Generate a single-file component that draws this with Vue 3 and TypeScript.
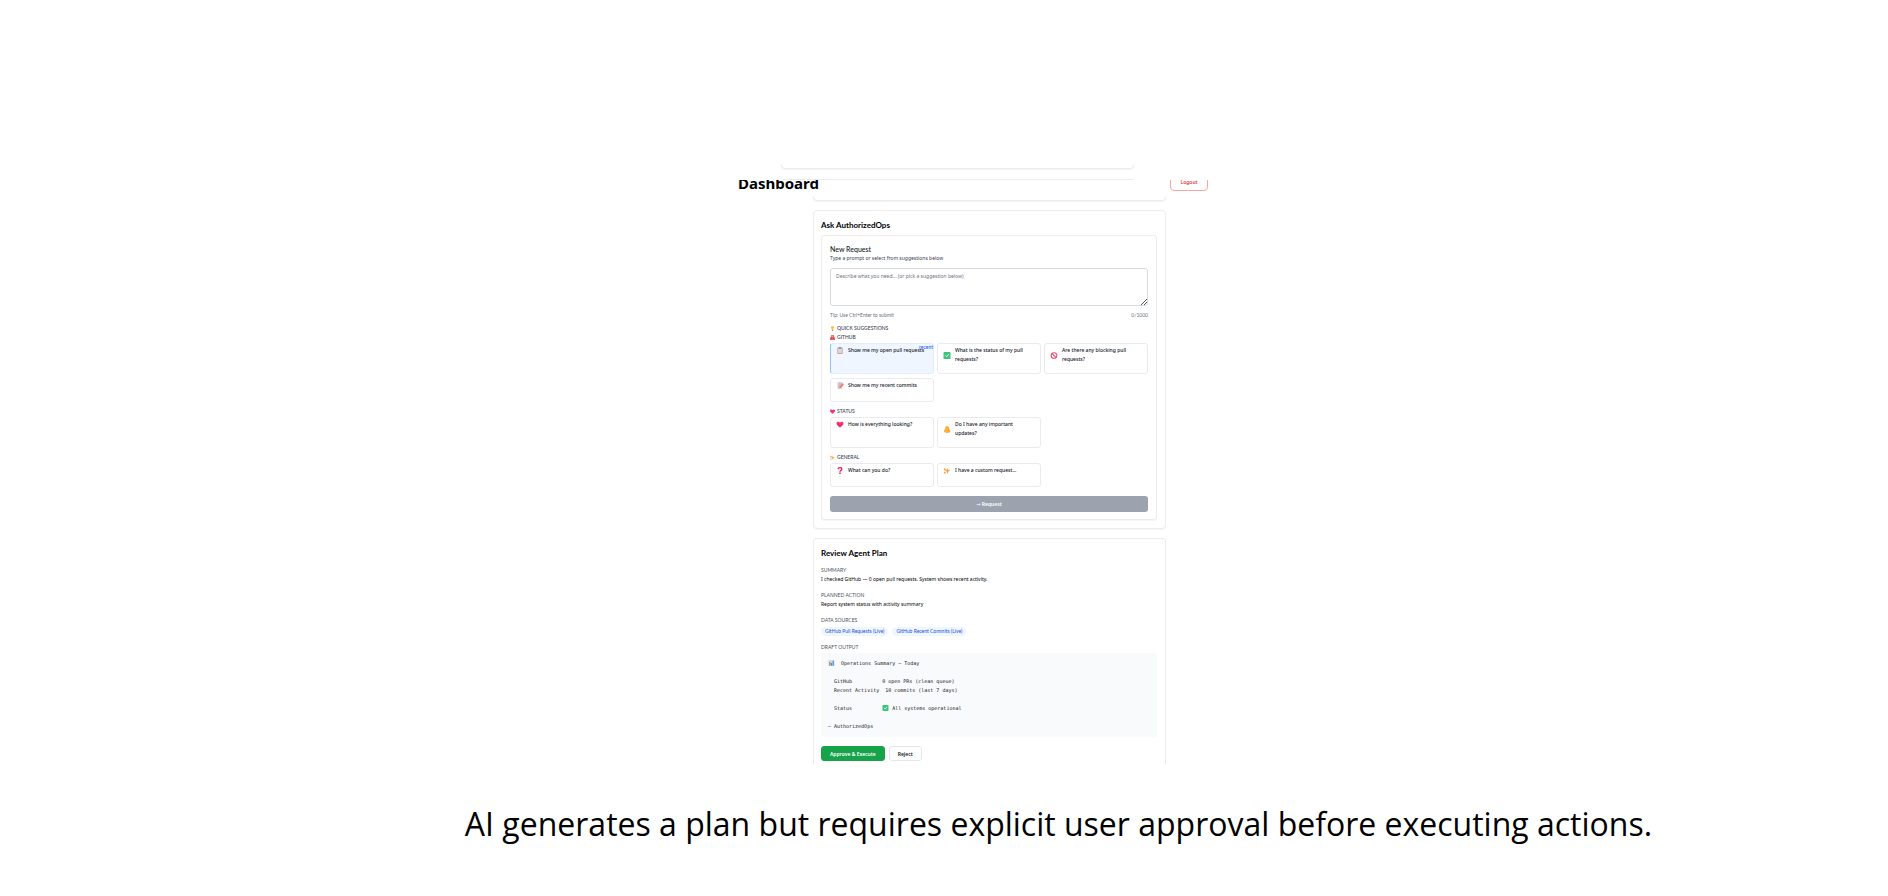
<script setup lang="ts">
import { ref } from 'vue'

interface Suggestion { icon: string; text: string; recent?: boolean }
interface Group { icon: string; name: string; items: Suggestion[] }

const prompt = ref('')
const groups: Group[] = [
  {
    icon: 'octopus', name: 'GITHUB', items: [
      { icon: 'clipboard', text: 'Show me my open pull requests', recent: true },
      { icon: 'check', text: 'What is the status of my pull requests?' },
      { icon: 'blocked', text: 'Are there any blocking pull requests?' },
      { icon: 'memo', text: 'Show me my recent commits' },
    ],
  },
  {
    icon: 'heart', name: 'STATUS', items: [
      { icon: 'heart', text: 'How is everything looking?' },
      { icon: 'bell', text: 'Do I have any important updates?' },
    ],
  },
  {
    icon: 'sparkles', name: 'GENERAL', items: [
      { icon: 'question', text: 'What can you do?' },
      { icon: 'sparkles', text: 'I have a custom request...' },
    ],
  },
]
const sources = ['GitHub Pull Requests (Live)', 'GitHub Recent Commits (Live)']
</script>

<template>
  <svg class="defs" aria-hidden="true">
    <symbol id="bulb" viewBox="0 0 16 16"><path d="M8 0a5 5 0 0 0-3 9l1 3h4l1-3a5 5 0 0 0-3-9z" fill="#fcc53a" /><path d="M6 12h4v3l-1 1H7l-1-1z" fill="#8d8796" /></symbol>
    <symbol id="octopus" viewBox="0 0 16 16"><path d="M3 4a5 5 0 0 1 10 0v3h3v9H0V7h3z" fill="#f4606a" /><path d="M3 9h3v3H3zM10 9h3v3h-3z" fill="#a03c60" /><path d="M5 2h5v4H5z" fill="#ff9a70" /></symbol>
    <symbol id="clipboard" viewBox="0 0 16 16"><rect x="2" y="1" width="12" height="15" rx="1" fill="#c79a8e" /><path d="M4 3h8v11H4z" fill="#e6e8f6" /><path d="M5 0h6v4H5z" fill="#9292a8" /><path d="M5 6h6M5 9h6M5 12h6" stroke="#b4b6cc" /></symbol>
    <symbol id="check" viewBox="0 0 16 16"><rect width="16" height="16" rx="2" fill="#3fc47c" /><path d="m4 8 3 3 5-6" fill="none" stroke="#fff" stroke-width="2" /></symbol>
    <symbol id="blocked" viewBox="0 0 16 16"><circle cx="8" cy="8" r="6.5" fill="#fff" stroke="#f4436c" stroke-width="2.4" /><path d="m3.5 3.5 9 9" stroke="#f4436c" stroke-width="2.4" /></symbol>
    <symbol id="memo" viewBox="0 0 16 16"><path d="M2 0h11v16H2z" fill="#d9d5e8" /><path d="M4 3h7M4 6h6M4 9h4M4 12h3" stroke="#9896ae" /><path d="m6 14 1-4 6-6 3 3-6 6z" fill="#f47b4f" /><path d="m12 4 2-1 2 2v2z" fill="#e8466e" /></symbol>
    <symbol id="heart" viewBox="0 0 16 16"><path d="M8 15C4 12 0 9 0 5c0-4 6-5 8-1 2-4 8-3 8 1 0 4-4 7-8 10z" fill="#f92f6f" /></symbol>
    <symbol id="bell" viewBox="0 0 16 16"><path d="M8 0c3 0 4 2 4 5l3 7v2H1v-2l3-7c0-3 1-5 4-5z" fill="#fbb13a" /><path d="M10 1c4 3 2 7 5 11v2h-5z" fill="#f9a035" /><path d="M6 14h4v2H6z" fill="#d08a4a" /></symbol>
    <symbol id="sparkles" viewBox="0 0 16 16"><path d="m9 2 2 5 5 1-5 2-2 6-2-6-4-2 4-1z" fill="#fba140" /><path d="m3 1 1 3 3 1-3 1-1 3-1-3-2-1 2-1zM3 10l1 2 2 1-2 1-1 2-1-2-2-1 2-1z" fill="#fa8f45" /></symbol>
    <symbol id="question" viewBox="0 0 16 16"><path d="M4 5c0-5 8-5 8 0 0 3-4 3-4 6" fill="none" stroke="#f3265c" stroke-width="3.4" /><circle cx="8" cy="14" r="2" fill="#f3265c" /></symbol>
    <symbol id="chart" viewBox="0 0 16 16"><path d="M0 0h16v16H0z" fill="#d7d9e8" /><path d="M2 5h3v10H2z" fill="#2fb477" /><path d="M6.500 8h3v7h-3z" fill="#ef476a" /><path d="M11 2h3v13h-3z" fill="#3b8bea" /></symbol>
  </svg>

  <main class="page">
    <div class="row row-top"><div class="edge edge-bottom"></div></div>
    <div class="band">
      <div class="row row-top"><div class="edge edge-top"></div></div>
      <div class="row row-head">
        <header class="head">
          <h1>Dashboard</h1>
          <button type="button" class="logout">Logout</button>
        </header>
      </div>
    </div>
    <div class="row row-main">
      <div class="column">
        <div class="edge edge-bottom"></div>

        <section class="card ask">
          <h2>Ask AuthorizedOps</h2>
          <form class="request" @submit.prevent>
            <h3><label for="prompt">New Request</label></h3>
            <p class="hint">Type a prompt or select from suggestions below</p>
            <div class="box">
              <textarea id="prompt" v-model="prompt" maxlength="1000" placeholder="Describe what you need... (or pick a suggestion below)"></textarea>
              <svg class="grip" viewBox="0 0 6 6" aria-hidden="true"><path d="M0 6 6 0M3 6l3-3" stroke="#555" /></svg>
            </div>
            <div class="meta"><span>Tip: Use Ctrl+Enter to submit</span><span>{{ prompt.length }}/1000</span></div>
            <h4 class="label quick"><svg aria-hidden="true"><use href="#bulb" /></svg>QUICK SUGGESTIONS</h4>
            <section v-for="g in groups" :key="g.name" class="group">
              <h5 class="label"><svg aria-hidden="true"><use :href="'#' + g.icon" /></svg>{{ g.name }}</h5>
              <div class="options">
                <button v-for="s in g.items" :key="s.text" type="button" class="option" :class="{ active: s.recent }" @click="prompt = s.text">
                  <span class="line"><svg aria-hidden="true"><use :href="'#' + s.icon" /></svg><span>{{ s.text }}</span></span>
                  <span v-if="s.recent" class="recent">recent</span>
                </button>
              </div>
            </section>
            <button type="submit" class="submit">→ Request</button>
          </form>
        </section>

        <section class="card review">
          <h2>Review Agent Plan</h2>
          <h3 class="cap">SUMMARY</h3>
          <p>I checked GitHub — 0 open pull requests. System shows recent activity.</p>
          <h3 class="cap">PLANNED ACTION</h3>
          <p>Report system status with activity summary</p>
          <h3 class="cap">DATA SOURCES</h3>
          <div class="pills"><span v-for="s in sources" :key="s">{{ s }}</span></div>
          <h3 class="cap">DRAFT OUTPUT</h3>
          <pre><svg aria-hidden="true"><use href="#chart" /></svg>  Operations Summary — Today

  GitHub          0 open PRs (clean queue)
  Recent Activity  10 commits (last 7 days)

  Status          <svg aria-hidden="true"><use href="#check" /></svg> All systems operational

— AuthorizedOps</pre>
          <div class="actions">
            <button type="button" class="approve">Approve &amp; Execute</button>
            <button type="button" class="reject">Reject</button>
          </div>
        </section>
      </div>
    </div>
    <p class="caption">AI generates a plan but requires explicit user approval before executing actions.</p>
  </main>
</template>

<style>
body { margin: 0; background: #fff; }
</style>

<style scoped>
* { box-sizing: border-box; }
h1, h2, h3, h4, h5, p, pre { margin: 0; }
button { font: inherit; padding: 0; cursor: pointer; }
.defs { position: absolute; width: 0; height: 0; }
.page { padding-top: 164px; font-family: "Noto Sans", "DejaVu Sans", sans-serif; font-size: 5px; line-height: 8px; color: #000; }
.row-top { padding-left: 27px; }
.row-head { padding-left: 58px; }
.row-main { padding-left: 91px; }
.edge { max-width: 353px; height: 5px; margin: 0 auto; border: 1px solid #ececee; }
.edge-bottom { border-top: 0; border-radius: 0 0 4px 4px; box-shadow: 0 1px 0 #f4f4f5; }
.edge-top { height: 2px; border-width: 1px 0 0; border-radius: 4px 4px 0 0; }
.band { display: grid; margin-top: 10px; height: 17px; overflow: hidden; }
.band > * { grid-area: 1 / 1; }
.head { display: flex; justify-content: space-between; align-items: flex-start; max-width: 470px; margin: 1px auto 0; overflow: hidden; }
h1 { margin-top: -7px; font-size: 15px; line-height: 20px; font-weight: 700; }
.logout { width: 38px; height: 18px; margin-top: -7px; border: 1px solid #fca5a5; border-radius: 4px; background: #fff; color: #dc2626; font-weight: 500; }
.column { max-width: 353px; margin: 0 auto; }
.card { padding: 8px 8px 8px 7px; border: 1px solid #ececee; border-radius: 4px; box-shadow: 0 1px 0 #f6f6f7; }
.ask { margin-top: 9px; }
h2 { font-family: Lato, sans-serif; font-size: 8px; line-height: 12px; font-weight: 700; }
.request { margin-top: 4px; padding: 9px 8px 7px; border: 1px solid #ececee; border-radius: 3px; box-shadow: 0 1px 0 #f6f6f7; }
.request h3 { font-family: Lato, sans-serif; font-size: 7px; line-height: 9px; font-weight: 500; color: #111827; }
.hint { color: #374151; }
.box { position: relative; margin-top: 6px; }
textarea { display: block; width: 100%; height: 38px; padding: 3px 5px; border: 1px solid #d8dadf; border-radius: 3px; resize: none; font: inherit; color: inherit; background: #fff; }
textarea::placeholder { color: #6b7280; }
.grip { position: absolute; right: 1px; bottom: 1px; width: 6px; height: 6px; }
.meta { display: flex; justify-content: space-between; margin-top: 5px; font-family: Lato, sans-serif; color: #6b7280; }
.label { display: flex; align-items: center; gap: 2px; font-family: Lato, sans-serif; font-size: 5px; line-height: 9px; font-weight: 500; color: #374151; }
.label svg { width: 5px; height: 5px; }
.quick { margin-top: 5px; }
.group + .group { margin-top: 5px; }
.options { display: grid; grid-template-columns: repeat(3, 1fr); gap: 4px 3px; margin-top: 1px; }
.option { position: relative; display: flex; align-items: flex-start; min-height: 24px; padding: 2px 5px 9px; border: 1px solid #eaebee; border-radius: 3px; background: #fff; color: #111827; text-align: left; line-height: 9px; font-weight: 500; }
.line { display: flex; align-items: center; gap: 4px; }
.line svg { flex: none; width: 8px; height: 7px; }
.active { background: #eff6ff; border-color: #e3edfd; border-left: 1px solid #93c5fd; }
.recent { position: absolute; right: 0; top: 0; font-family: Lato, sans-serif; font-size: 5px; line-height: 7px; color: #2563eb; }
.submit { width: 100%; height: 16px; margin-top: 9px; border: 0; border-radius: 3px; background: #9ca3af; color: #fff; font-weight: 600; }
.review { margin-top: 9px; padding-bottom: 3px; border-bottom: 0; border-radius: 4px 4px 0 0; box-shadow: none; }
.cap { margin-top: 7px; font-family: Lato, sans-serif; font-size: 5px; line-height: 8px; font-weight: 400; color: #4b5563; }
.review p { line-height: 10px; }
.pills { display: flex; gap: 4px; margin-top: 3px; font-family: Lato, sans-serif; }
.pills span { padding: 0 4px; border-radius: 5px; line-height: 9px; background: #eff6ff; color: #1d4ed8; }
pre { margin-top: 2px; padding: 6px 7px; border-radius: 3px; background: #f9fafb; font: 5px/9px "DejaVu Sans Mono", monospace; color: #111827; }
pre svg { width: 7px; height: 6px; vertical-align: -1px; }
.actions { display: flex; gap: 4px; margin-top: 9px; }
.actions button { height: 15px; padding: 0 8px; border-radius: 3px; font-weight: 600; }
.actions .approve { border: 1px solid #16a34a; background: #16a34a; color: #fff; }
.actions .reject { border: 1px solid #e5e7eb; background: #fff; color: #111827; }
.caption { margin-top: 36px; padding-left: 229px; font: 400 32px/48px "Open Sans", sans-serif; color: #000; text-align: center; }
</style>
